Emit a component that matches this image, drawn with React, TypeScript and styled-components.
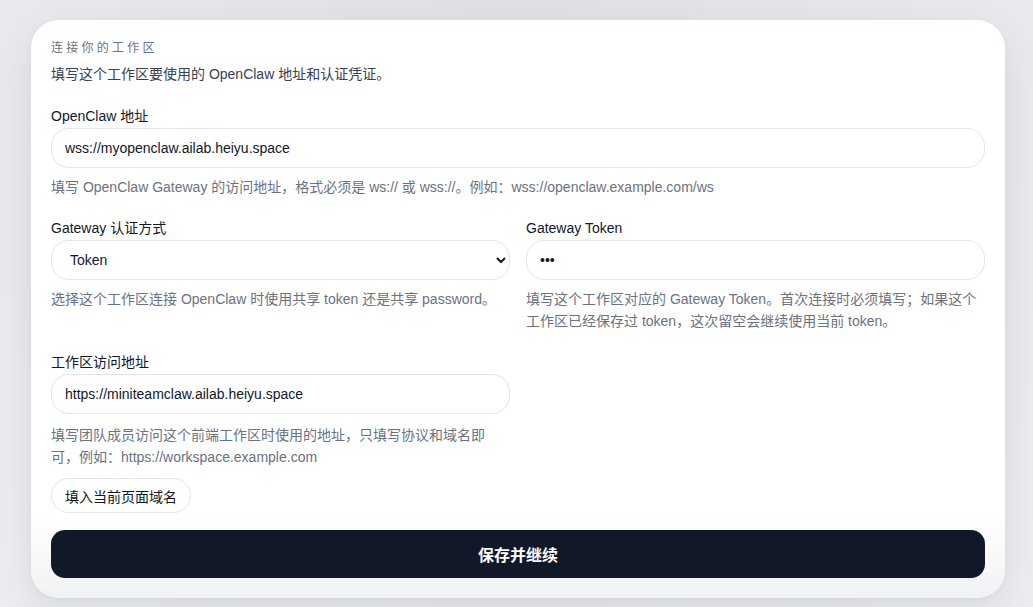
import React from 'react';
import styled, { createGlobalStyle } from 'styled-components';

const GlobalStyle = createGlobalStyle`
	html, body {
		margin: 0;
		padding: 0;
	}
	body {
		background: radial-gradient(ellipse at 50% 0%, #dfe0e4 0%, #e7e8ec 60%, #eceef1 100%);
		font-family: 'Liberation Sans', 'Noto Sans CJK SC', sans-serif;
		min-height: 607px;
	}
`;

const Page = styled.div`
	padding: 20px 28px 9px 31px;
	box-sizing: border-box;
	height: 607px;
`;

const Card = styled.div`
	background: #ffffff;
	border-radius: 28px;
	box-shadow: 0 18px 48px rgba(15, 23, 42, 0.08), 0 2px 6px rgba(15, 23, 42, 0.04);
	height: 578px;
	box-sizing: border-box;
	display: flex;
	flex-direction: column;
	overflow: hidden;
`;

const Body = styled.div`
	padding: 20px 20px 0;
	display: flex;
	flex-direction: column;
`;

const Eyebrow = styled.div`
	font-size: 12px;
	line-height: 16px;
	letter-spacing: 0.27em;
	color: #6b7280;
`;

const Intro = styled.p`
	margin: 7px 0 0;
	font-size: 14px;
	line-height: 22px;
	color: #374151;
`;

const Field = styled.div<{ $top?: number }>`
	display: flex;
	flex-direction: column;
	margin-top: ${p => p.$top ?? 20}px;
`;

const Row = styled.div`
	display: grid;
	grid-template-columns: 1fr 1fr;
	column-gap: 16px;
	margin-top: 20px;
	align-items: start;
`;

const Label = styled.label`
	font-size: 14px;
	line-height: 20px;
	color: #111827;
	margin-bottom: 2px;
`;

const TextInput = styled.input`
	height: 40px;
	box-sizing: border-box;
	border: 1px solid #e2e4e8;
	border-radius: 18px;
	padding: 0 13px;
	font-family: inherit;
	font-size: 14px;
	color: #111827;
	background: #ffffff;
	outline: none;
`;

const Select = styled.select`
	height: 40px;
	box-sizing: border-box;
	border: 1px solid #e2e4e8;
	border-radius: 18px;
	padding: 0 6px 0 14px;
	font-family: inherit;
	font-size: 14px;
	color: #111827;
	background: #ffffff;
	outline: none;
`;

const Help = styled.p<{ $top?: number }>`
	margin: ${p => p.$top ?? 8}px 0 0;
	font-size: 14px;
	line-height: 22px;
	color: #6b7280;
`;

const GhostButton = styled.button`
	align-self: flex-start;
	margin-top: 10px;
	height: 35px;
	box-sizing: border-box;
	padding: 0 13px;
	border: 1px solid #e2e4e8;
	border-radius: 18px;
	background: #ffffff;
	font-family: inherit;
	font-size: 14px;
	color: #111827;
	cursor: pointer;
`;

const Footer = styled.div`
	margin-top: auto;
	padding: 16px 20px 20px;
	background: linear-gradient(180deg, rgba(255, 255, 255, 0) 0%, #f1f2f3 100%);
`;

const SaveButton = styled.button`
	width: 100%;
	height: 48px;
	border: none;
	border-radius: 14px;
	background: #111827;
	color: #ffffff;
	font-family: inherit;
	font-size: 16px;
	font-weight: 700;
	cursor: pointer;
`;

export default function App() {
	return (
		<>
			<GlobalStyle />
			<Page>
				<Card>
					<Body>
						<Eyebrow>连接你的工作区</Eyebrow>
						<Intro>填写这个工作区要使用的 OpenClaw 地址和认证凭证。</Intro>

						<Field $top={21}>
							<Label>OpenClaw 地址</Label>
							<TextInput readOnly value="wss://myopenclaw.ailab.heiyu.space" />
							<Help>填写 OpenClaw Gateway 的访问地址，格式必须是 ws:// 或 wss://。例如：wss://openclaw.example.com/ws</Help>
						</Field>

						<Row>
							<Field $top={0}>
								<Label>Gateway 认证方式</Label>
								<Select defaultValue="token">
									<option value="token">Token</option>
									<option value="password">Password</option>
								</Select>
								<Help>选择这个工作区连接 OpenClaw 时使用共享 token 还是共享 password。</Help>
							</Field>
							<Field $top={0}>
								<Label>Gateway Token</Label>
								<TextInput type="password" readOnly value="abc" />
								<Help>
									填写这个工作区对应的 Gateway Token。首次连接时必须填写；如果这个工作区已经保存过 token，这次留空会继续使用当前 token。
								</Help>
							</Field>
						</Row>

						<Row>
							<Field $top={0}>
								<Label>工作区访问地址</Label>
								<TextInput readOnly value="https://miniteamclaw.ailab.heiyu.space" />
								<Help $top={10}>填写团队成员访问这个前端工作区时使用的地址，只填写协议和域名即可，例如：https://workspace.example.com</Help>
								<GhostButton>填入当前页面域名</GhostButton>
							</Field>
						</Row>
					</Body>
					<Footer>
						<SaveButton>保存并继续</SaveButton>
					</Footer>
				</Card>
			</Page>
		</>
	);
}
